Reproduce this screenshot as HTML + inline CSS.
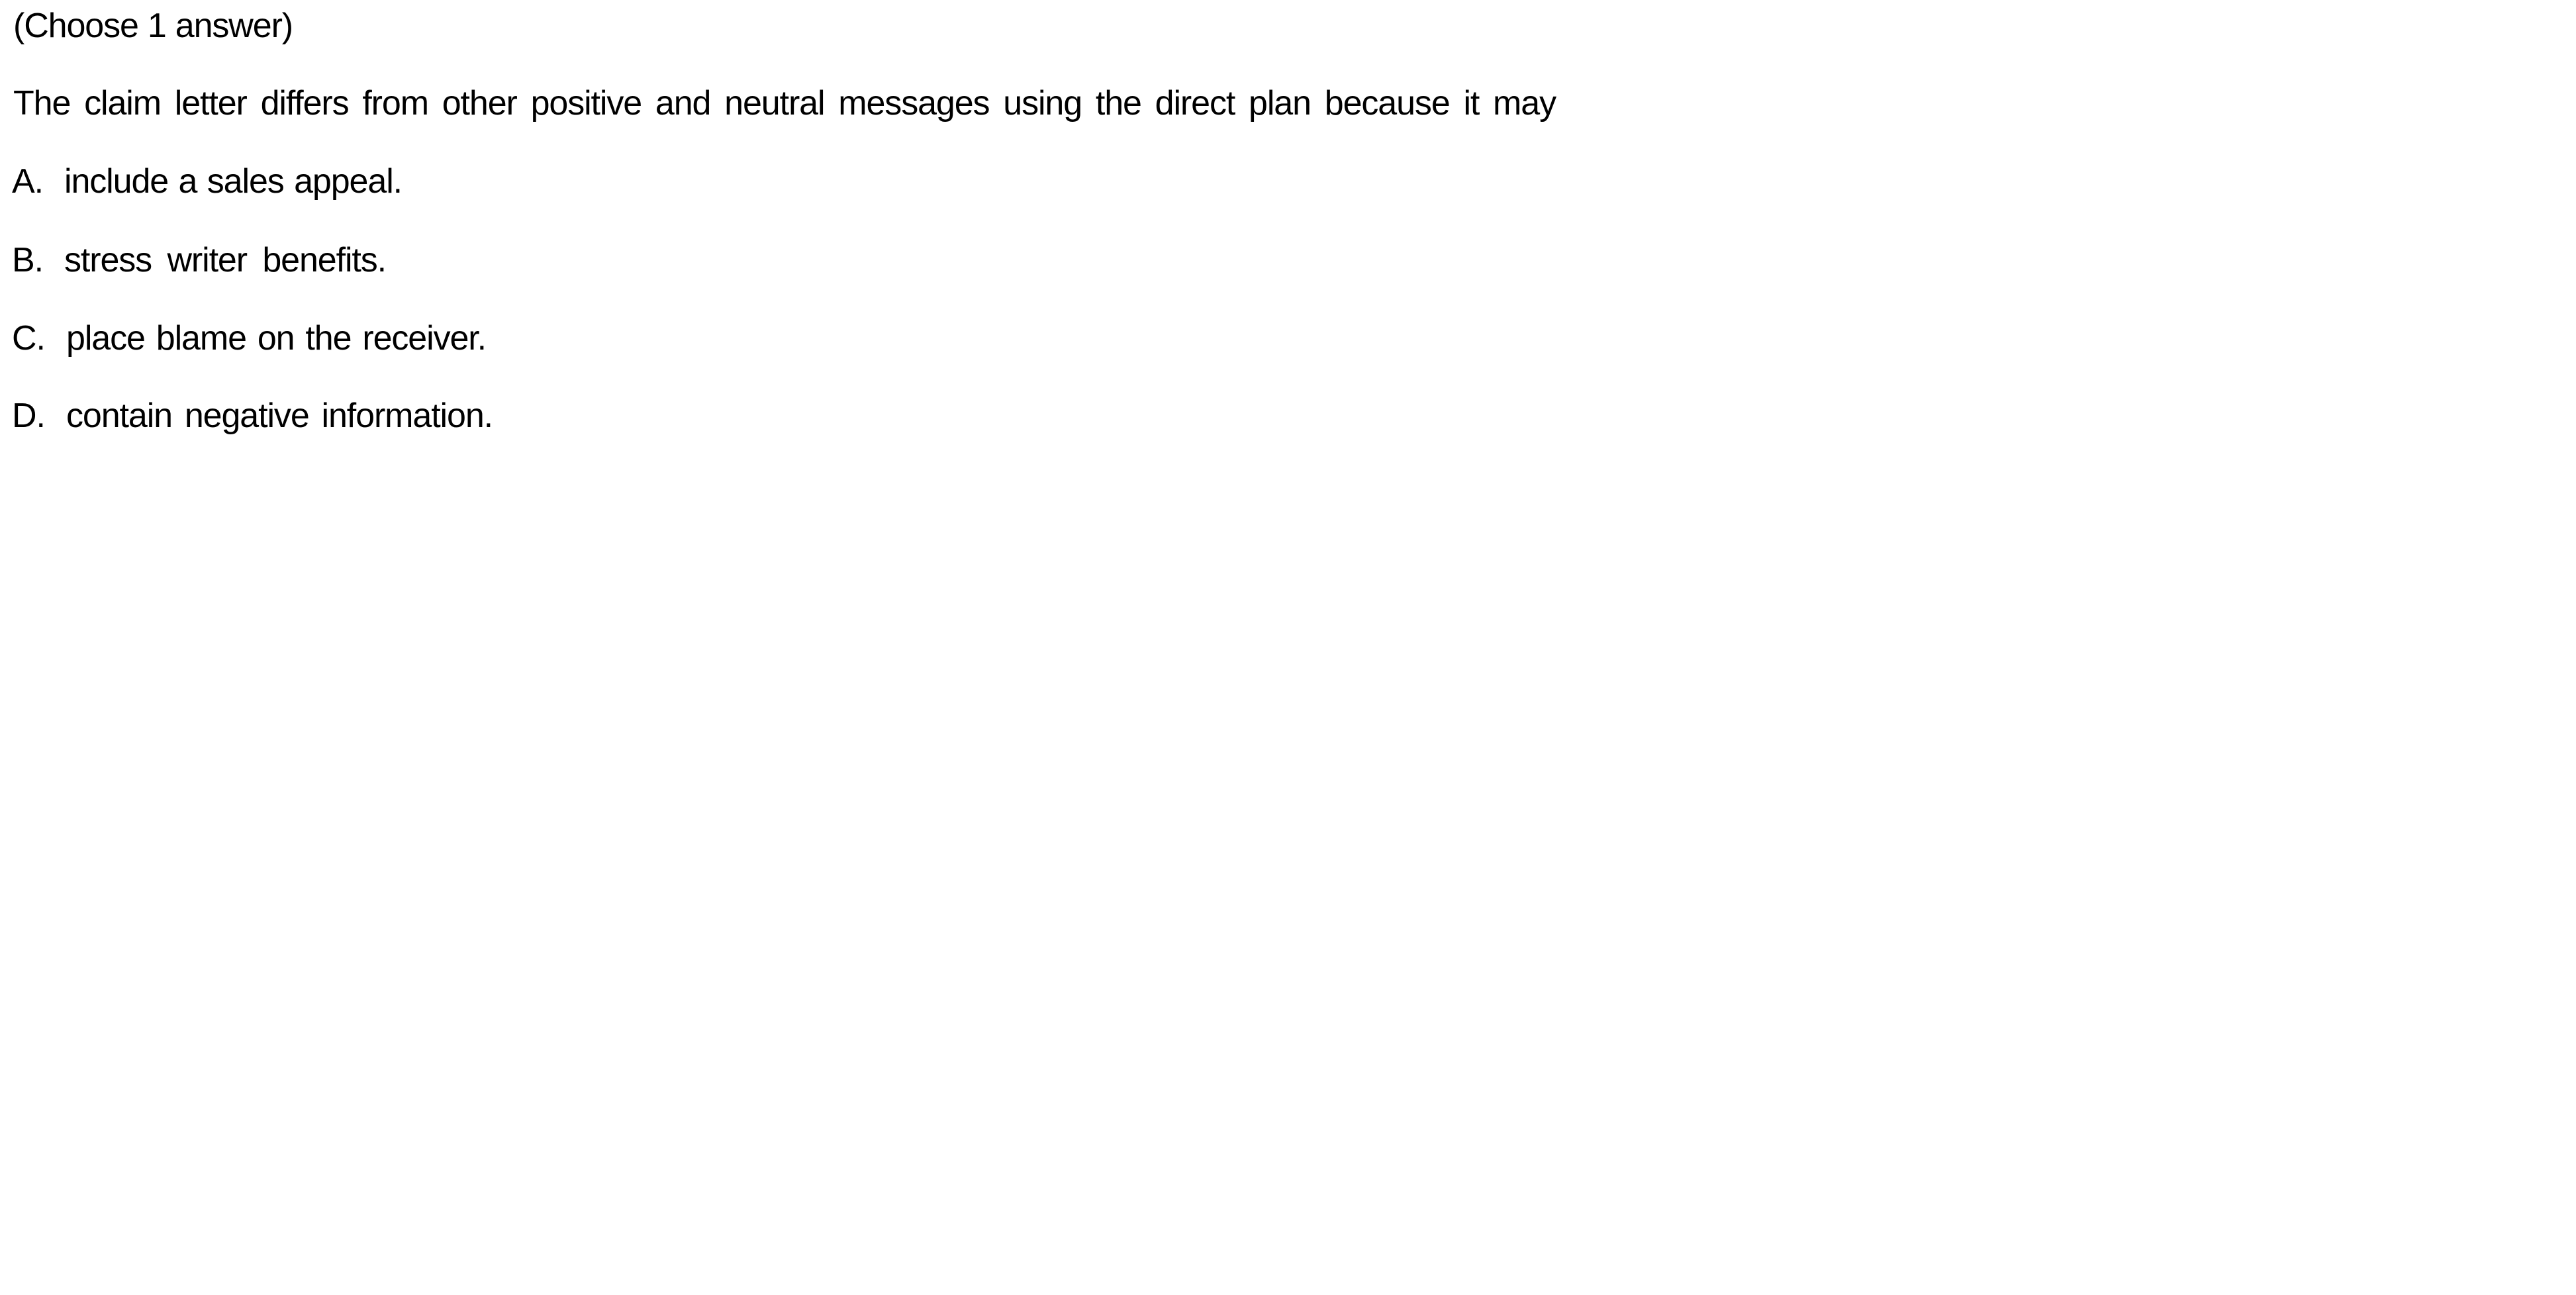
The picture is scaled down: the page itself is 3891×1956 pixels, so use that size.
<!DOCTYPE html>
<html><head><meta charset="utf-8"><style>
html,body{margin:0;padding:0;background:#fff;width:3891px;height:1956px;overflow:hidden}
.l{position:absolute;font-family:"Liberation Sans",Arial,sans-serif;font-size:52px;line-height:50px;color:#000;white-space:nowrap;text-align:justify;text-align-last:justify;letter-spacing:-1.1px}
</style></head><body>
<div class="l" style="left:20px;top:14px;width:422px">(Choose 1 answer)</div>
<div class="l" style="left:20px;top:131px;width:2330px">The claim letter differs from other positive and neutral messages using the direct plan because it may</div>
<div class="l" style="left:18px;top:249px">A.</div>
<div class="l" style="left:97px;top:249px;width:510px">include a sales appeal.</div>
<div class="l" style="left:18px;top:368px">B.</div>
<div class="l" style="left:97px;top:368px;width:486px">stress writer benefits.</div>
<div class="l" style="left:18px;top:486px">C.</div>
<div class="l" style="left:100px;top:486px;width:634px">place blame on the receiver.</div>
<div class="l" style="left:18px;top:603px">D.</div>
<div class="l" style="left:100px;top:603px;width:644px">contain negative information.</div>
</body></html>
